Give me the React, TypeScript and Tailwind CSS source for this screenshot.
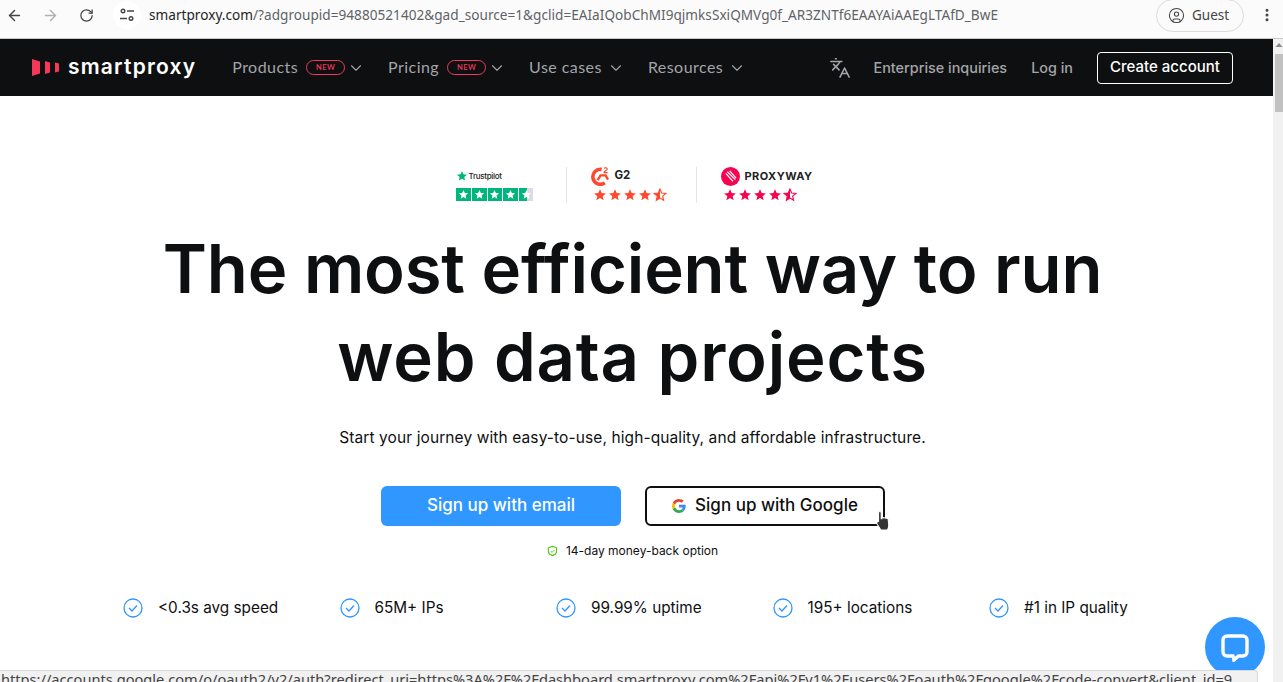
import { ArrowLeft, ArrowRight, RotateCw, ChevronDown, Languages, CircleUser, EllipsisVertical } from 'lucide-react'

const features = ['<0.3s avg speed', '65M+ IPs', '99.99% uptime', '195+ locations', '#1 in IP quality']

const STAR = 'M12 2l2.9 6.6 7.1.7-5.4 4.7 1.6 7-6.2-3.7-6.2 3.7 1.6-7L2 9.3l7.1-.7z'

function NavItem({ label, isNew }: { label: string; isNew?: boolean }) {
  return (
    <div className="flex items-center text-[16px] text-[#a3a5a8] font-['Lato',sans-serif] tracking-[0.45px]">
      <span className="pb-[2px]">{label}</span>
      {isNew && (
        <span className="ml-2 h-[15px] w-[39px] rounded-full border border-[#f4385a] flex items-center justify-center text-[7.5px] font-semibold text-[#f4385a]">
          NEW
        </span>
      )}
      <ChevronDown size={18} strokeWidth={1.5} className={isNew ? 'ml-[2px]' : 'ml-[5px]'} />
    </div>
  )
}

function Stars({ color }: { color: string }) {
  return (
    <div className="flex gap-[1px]">
      {[0, 1, 2, 3, 4].map(i => (
        <svg key={i} width="14" height="14" viewBox="0 0 24 24">
          {i < 4 ? (
            <path d={STAR} fill={color} />
          ) : (
            <>
              <path d={STAR} fill="none" stroke={color} strokeWidth="2" />
              <path d="M12 2v15.3l-6.2 3.7 1.6-7L2 9.3l7.1-.7z" fill={color} />
            </>
          )}
        </svg>
      ))}
    </div>
  )
}

function Ratings() {
  return (
    <div className="flex items-center h-[37px] pl-[4px]">
      <div className="w-[77px]">
        <div className="flex items-center h-[14px]">
          <svg width="12" height="12" viewBox="0 0 24 24">
            <path d={STAR} fill="#00b67a" />
          </svg>
          <span className="text-[8px] text-[#222] font-['Inter',sans-serif] font-medium tracking-[-0.3px]">Trustpilot</span>
        </div>
        <div className="flex gap-[1px] mt-[5px]">
          {[0, 1, 2, 3].map(i => (
            <div key={i} className="w-[15px] h-[13px] bg-[#00b67a] flex items-center justify-center">
              <svg width="11" height="11" viewBox="0 0 24 24">
                <path d={STAR} fill="#fff" />
              </svg>
            </div>
          ))}
          <div className="w-[15px] h-[13px] flex bg-[#dcdce6] relative items-center justify-center">
            <div className="absolute left-0 top-0 bottom-0 w-[8px] bg-[#00b67a]" />
            <svg width="11" height="11" viewBox="0 0 24 24" className="relative">
              <path d={STAR} fill="#fff" />
            </svg>
          </div>
        </div>
      </div>
      <div className="w-px h-[36px] bg-[#e4e4e4] ml-[33px]" />
      <div className="ml-[24px] w-[81px]">
        <div className="flex items-center h-[18px]">
          <svg width="19" height="19" viewBox="0 0 24 24" fill="none">
            <path d="M17.5 20A9.500 9.500 0 1 1 13.500 3" stroke="#ff492c" strokeWidth="4.500" />
            <path d="M8.500 16.500l3.500-6h6.500l3 5.500" stroke="#ff492c" strokeWidth="3" />
            <path d="M16.500 2c.5-1.500 4-1.500 4 .5 0 1.500-4 2.500-4 4.500h4.500" stroke="#ff492c" strokeWidth="1.500" />
          </svg>
          <span className="ml-[4px] text-[11.500px] font-bold text-[#222] font-['Inter',sans-serif]">G2</span>
        </div>
        <div className="ml-[2px] mt-[3px]">
          <Stars color="#ff492c" />
        </div>
      </div>
      <div className="w-px h-[36px] bg-[#e4e4e4] ml-[24px]" />
      <div className="ml-[24px]">
        <div className="flex items-center h-[18px]">
          <svg width="19" height="19" viewBox="0 0 24 24">
            <circle cx="12" cy="12" r="12" fill="#f5054f" />
            <path d="M6 8l9 10M8 6l10 10M11 5l8 9" stroke="#fff" strokeWidth="1.500" />
          </svg>
          <span className="ml-[4px] text-[11px] font-bold text-[#222] font-['Inter',sans-serif] tracking-[0.45px]">PROXYWAY</span>
        </div>
        <div className="ml-[2px] mt-[3px]">
          <Stars color="#f5054f" />
        </div>
      </div>
    </div>
  )
}

export default function App() {
  return (
    <div className="relative h-[682px] w-[1283px] overflow-hidden bg-white">
      {/* browser toolbar */}
      <div className="h-[39px] flex items-center border-b border-[#c9c9c9] bg-[#fbfbfb] pl-[6px] pr-[8px] pb-[8px]">
        <ArrowLeft size={17} strokeWidth={2} className="text-[#444]" />
        <ArrowRight size={17} strokeWidth={2} className="ml-[19px] text-[#b0b0b0]" />
        <RotateCw size={15} strokeWidth={2} className="ml-[20px] text-[#444]" />
        <div className="ml-[19px] w-[28px] h-[28px] rounded-full bg-white flex items-center justify-center">
          <svg width="14" height="14" viewBox="0 0 14 14" fill="none" stroke="#444" strokeWidth="1.400">
            <circle cx="3" cy="3" r="1.800" />
            <path d="M7 3h7M0 10.500h7" />
            <circle cx="11" cy="10.500" r="1.800" />
          </svg>
        </div>
        <div className="ml-[8px] flex-1 text-[13.600px] whitespace-nowrap font-['Noto_Sans',sans-serif] tracking-[0.02px] text-[#5f6368]">
          <span className="text-[#1f1f1f]">smartproxy.com</span>/?adgroupid=94880521402&gad_source=1&gclid=EAIaIQobChMI9qjmksSxiQMVg0f_AR3ZNTf6EAAYAiAAEgLTAfD_BwE
        </div>
        <div className="h-[33px] w-[88px] rounded-full border border-[#dcdcdc] flex items-center pl-[11px] text-[#444] font-['Noto_Sans',sans-serif] text-[13.500px]">
          <CircleUser size={17} strokeWidth={1.500} />
          <span className="ml-[7px]">Guest</span>
        </div>
        <EllipsisVertical size={16} strokeWidth={2.500} className="ml-[15px] text-[#444]" />
      </div>

      <div className="flex h-[643px]">
        <main className="w-[1273px] flex flex-col">
          {/* site nav */}
          <nav className="h-[57px] shrink-0 bg-[#0e0f11] flex items-center pl-[32px] pr-[40px]">
            <svg width="28" height="17" viewBox="0 0 28 17" fill="#f4385a">
              <path d="M0 0l8 2.500v12L0 17zM13 2l5 1.500v10L13 15zM23 3.500l4 1v8l-4 1z" />
            </svg>
            <span className="ml-[8px] text-[21px] leading-none font-semibold text-white font-['Inter',sans-serif] tracking-[1.200px] pb-[2px]">smartproxy</span>
            <div className="ml-[36px] flex items-center gap-[23px]">
              <NavItem label="Products" isNew />
              <NavItem label="Pricing" isNew />
              <NavItem label="Use cases" />
              <NavItem label="Resources" />
            </div>
            <div className="ml-auto flex items-center">
              <Languages size={22} strokeWidth={1.700} className="text-[#a3a5a8]" />
              <span className="ml-[22px] text-[14.400px] font-medium text-[#a3a5a8] font-['Inter',sans-serif]">Enterprise inquiries</span>
              <span className="ml-[24px] text-[14.400px] font-medium text-[#a3a5a8] font-['Inter',sans-serif]">Log in</span>
              <button className="ml-[24px] w-[136px] h-[32px] rounded-[4px] border border-white text-white text-[15px] font-medium font-['Inter',sans-serif]">
                Create account
              </button>
            </div>
          </nav>

          {/* hero */}
          <section className="flex-1 flex flex-col items-center pt-[70px] pr-[8px]">
            <Ratings />
            <h1 className="mt-[22px] text-center text-[67px] leading-[88px] font-semibold text-[#0e0f11] font-['Inter',sans-serif] tracking-[-0.15px]">
              The most efficient way to run
              <br />
              <span className="tracking-[0.8px]">web data projects</span>
            </h1>
            <p className="mt-[26px] text-[15.500px] leading-[22px] text-[#0e0f11] font-['Inter',sans-serif] tracking-[0.1px]">
              Start your journey with easy-to-use, high-quality, and affordable infrastructure.
            </p>
            <div className="mt-[37px] flex gap-[24px] pl-[1px] font-['Inter',sans-serif]">
              <button className="w-[240px] h-[40px] rounded-[6px] bg-[#2f97ff] text-white text-[17px] font-medium">
                Sign up with email
              </button>
              <button className="relative w-[240px] h-[40px] rounded-[6px] border-2 border-[#0e0f11] bg-white text-[#0e0f11] text-[17px] font-medium flex items-center justify-center gap-[9px]">
                <svg width="14" height="14" viewBox="0 0 48 48">
                  <path fill="#EA4335" d="M24 9.500c3.500 0 6.700 1.200 9.200 3.600l6.900-6.900C35.900 2.400 30.500 0 24 0 14.600 0 6.500 5.400 2.600 13.200l8 6.200C12.500 13.600 17.800 9.500 24 9.500z" />
                  <path fill="#4285F4" d="M46.900 24.500c0-1.600-.1-3.100-.4-4.500H24v9h12.900c-.6 3-2.200 5.500-4.700 7.200l7.700 6c4.500-4.200 7-10.300 7-17.700z" />
                  <path fill="#FBBC05" d="M10.500 28.600c-.5-1.400-.8-3-.8-4.600s.3-3.200.8-4.600l-8-6.200C.9 16.500 0 20.100 0 24s.9 7.500 2.600 10.800l7.900-6.200z" />
                  <path fill="#34A853" d="M24 48c6.500 0 11.900-2.100 15.900-5.800l-7.700-6c-2.200 1.500-4.900 2.300-8.200 2.300-6.200 0-11.500-4.200-13.400-9.800l-8 6.200C6.500 42.600 14.600 48 24 48z" />
                </svg>
                Sign up with Google
                {/* pointer */}
                <svg width="15" height="20" viewBox="1 1 14 19" className="absolute left-[229px] top-[23px]">
                  <path
                    d="M4.500 1.500c.8 0 1.300.5 1.300 1.300v5.500h.8V7.500c.6-.6 1.500-.5 1.900.2.600-.5 1.600-.4 2 .3.700-.4 1.700-.1 1.900.7l.6 5.500c0 2-.8 3.800-1.500 4.800H5.500L2 13.500c-.6-1-.5-1.800.1-2.200.5-.3 1.100-.2 1.200.1V2.800c0-.8.400-1.300 1.200-1.300z"
                    fill="#333"
                    stroke="#fff"
                    strokeWidth="1"
                  />
                </svg>
              </button>
            </div>
            <div className="mt-[17px] flex items-center text-[12px] leading-[16px] text-[#0e0f11] font-['Inter',sans-serif]">
              <svg width="11" height="12" viewBox="0 0 24 24" fill="none" stroke="#4fc51d" strokeWidth="2.500">
                <path d="M12 2l9 3v7c0 5-4 8.500-9 10-5-1.500-9-5-9-10V5z" />
                <path d="M8 12l3 3 5-5" strokeWidth="2" />
              </svg>
              <span className="ml-[8px]">14-day money-back option</span>
            </div>
            <div className="mt-[39px] w-full flex pl-[123px]">
              {features.map(f => (
                <div key={f} className="w-[216.500px] flex items-center text-[15.300px] leading-[20px] text-[#0e0f11] font-['Inter',sans-serif]">
                  <svg width="20" height="20" viewBox="0 0 20 20" fill="none" stroke="#2f97ff" strokeWidth="1.300">
                    <circle cx="10" cy="10" r="9" />
                    <path d="M6 10l3 3 5-5.500" />
                  </svg>
                  <span className="ml-[15px]">{f}</span>
                </div>
              ))}
            </div>
          </section>
        </main>

        {/* page scrollbar */}
        <div className="w-[10px] bg-[#f1f1f1] flex flex-col items-end">
          <svg width="8" height="6" viewBox="0 0 8 6" className="mt-[3px]">
            <path d="M4 1l3.500 4H.5z" fill="#8a8a8a" />
          </svg>
          <div className="w-[8px] h-[58px] bg-[#c1c1c1] mt-[6px]" />
        </div>
      </div>

      {/* chat bubble */}
      <div className="absolute left-[1205px] top-[617px] w-[60px] h-[60px] rounded-full bg-[#2f97ff] flex items-center justify-center">
        <svg width="28" height="28" viewBox="0 0 28 28" className="mt-[1px]">
          <path
            d="M6 2h16a4 4 0 0 1 4 4v12a4 4 0 0 1-4 4h-4.500l-4.500 4c-.2-1.500-.5-3-1-4H6a4 4 0 0 1-4-4V6a4 4 0 0 1 4-4z"
            fill="none"
            stroke="#fff"
            strokeWidth="3.400"
          />
        </svg>
      </div>

      {/* link status bubble */}
      <div className="absolute left-0 top-[670px] w-[1258px] h-[12px] bg-[#f1f1f1] border-t border-r border-[#d9d9d9] rounded-tr-[4px] overflow-hidden whitespace-nowrap pl-[1px] text-[14.620px] leading-[16px] text-[#444] font-['Noto_Sans',sans-serif]">
        https://accounts.google.com/o/oauth2/v2/auth?redirect_uri=https%3A%2F%2Fdashboard.smartproxy.com%2Fapi%2Fv1%2Fusers%2Foauth%2Fgoogle%2Fcode-convert&client_id=9
      </div>
    </div>
  )
}
